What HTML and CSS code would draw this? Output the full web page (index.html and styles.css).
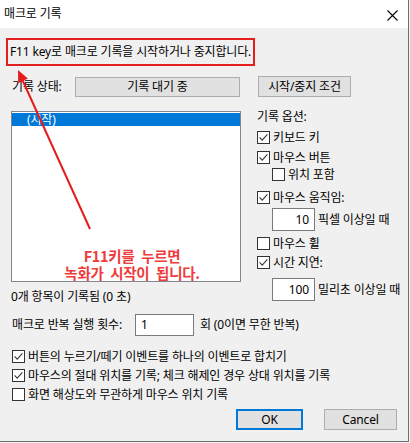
FILE: index.html
```html
<!DOCTYPE html>
<html lang="ko">
<head>
<meta charset="utf-8">
<title>매크로 기록</title>
<link rel="stylesheet" href="styles.css">
</head>
<body>
<div class="dialog">
  <div class="titlebar">
    <span class="title">매크로 기록</span>
    <svg class="close" viewBox="0 0 11 11" width="11" height="11"><path d="M0.5 0.5 L10.5 10.5 M10.5 0.5 L0.5 10.5" stroke="#000" stroke-width="1.1" fill="none"/></svg>
  </div>
  <div class="content">
    <div class="hint">F11 key로 매크로 기록을 시작하거나 중지합니다.</div>
    <div class="status-row">
      <span class="status-label">기록 상태:</span>
      <div class="status">기록 대기 중</div>
      <button class="btn cond">시작/중지 조건</button>
    </div>
    <div class="main">
      <div class="left">
        <div class="list">
          <div class="item selected">(시작)</div>
        </div>
        <div class="count">0개 항목이 기록됨 (0 초)</div>
      </div>
      <div class="options">
        <div class="opt-title">기록 옵션:</div>
        <div class="cb-row mt8"><span class="cb checked"><svg viewBox="0 0 11 11"><path d="M1.6 5.4 L4.2 8.2 L9.4 2.4" stroke="#3a3a3a" stroke-width="1.1" fill="none"/></svg></span><span>키보드 키</span></div>
        <div class="cb-row mt7"><span class="cb checked"><svg viewBox="0 0 11 11"><path d="M1.6 5.4 L4.2 8.2 L9.4 2.4" stroke="#3a3a3a" stroke-width="1.1" fill="none"/></svg></span><span>마우스 버튼</span></div>
        <div class="cb-row mt4 indent"><span class="cb"></span><span>위치 포함</span></div>
        <div class="cb-row mt10"><span class="cb checked"><svg viewBox="0 0 11 11"><path d="M1.6 5.4 L4.2 8.2 L9.4 2.4" stroke="#3a3a3a" stroke-width="1.1" fill="none"/></svg></span><span>마우스 움직임:</span></div>
        <div class="field-row mt4 indent"><span class="field num">10</span><span class="after">픽셀 이상일 때</span></div>
        <div class="cb-row mt6"><span class="cb"></span><span>마우스 휠</span></div>
        <div class="cb-row mt6"><span class="cb checked"><svg viewBox="0 0 11 11"><path d="M1.6 5.4 L4.2 8.2 L9.4 2.4" stroke="#3a3a3a" stroke-width="1.1" fill="none"/></svg></span><span>시간 지연:</span></div>
        <div class="field-row mt9 indent"><span class="field num">100</span><span class="after">밀리초 이상일 때</span></div>
      </div>
    </div>
    <div class="repeat-row">
      <span class="repeat-label">매크로 반복 실행 횟수:</span>
      <span class="field repeat">1</span>
      <span class="repeat-after">회 (0이면 무한 반복)</span>
    </div>
    <div class="checks">
      <div class="cb-row"><span class="cb checked"><svg viewBox="0 0 11 11"><path d="M1.6 5.4 L4.2 8.2 L9.4 2.4" stroke="#3a3a3a" stroke-width="1.1" fill="none"/></svg></span><span>버튼의 누르기/떼기 이벤트를 하나의 이벤트로 합치기</span></div>
      <div class="cb-row"><span class="cb checked"><svg viewBox="0 0 11 11"><path d="M1.6 5.4 L4.2 8.2 L9.4 2.4" stroke="#3a3a3a" stroke-width="1.1" fill="none"/></svg></span><span>마우스의 절대 위치를 기록; 체크 해제인 경우 상대 위치를 기록</span></div>
      <div class="cb-row"><span class="cb"></span><span>화면 해상도와 무관하게 마우스 위치 기록</span></div>
    </div>
    <div class="buttons">
      <button class="btn ok">OK</button>
      <button class="btn cancel">Cancel</button>
    </div>
  </div>
  <svg class="arrow" viewBox="0 0 409 442" width="409" height="442">
    <line x1="90" y1="229" x2="21.5" y2="78" stroke="#e61c1c" stroke-width="2"/>
    <polygon points="18,70 27.8,78.6 18.2,83.2" fill="#e61c1c"/>
  </svg>
  <div class="note">
    <div class="note-line">F11키를 누르면</div>
    <div class="note-line">녹화가 시작이 됩니다.</div>
  </div>
</div>
</body>
</html>
```
FILE: styles.css
```css
* { box-sizing: border-box; }

html, body {
  margin: 0;
  padding: 0;
  background: #f2f2f2;
}

body {
  font-family: "Noto Sans", "Noto Sans CJK KR", sans-serif;
  font-size: 12px;
  line-height: 16px;
  letter-spacing: -0.15px;
  color: #000;
}

.dialog {
  position: relative;
  width: 409px;
  height: 442px;
  background: #f0f0f0;
  border-right: 1px solid #6f6f6f;
  border-bottom: 1px solid #6f6f6f;
}

.titlebar {
  height: 28px;
  background: #fff;
  display: flex;
  align-items: center;
  justify-content: space-between;
  padding-left: 4px;
  padding-right: 10px;
}

.close {
  display: block;
  margin-top: 2px;
}

.content {
  display: flex;
  flex-direction: column;
  align-items: flex-start;
}

.hint {
  margin: 10px 0 0 6px;
  width: 249px;
  height: 28px;
  border: 2px solid #e31e1e;
  padding-left: 2px;
  display: flex;
  align-items: center;
  white-space: nowrap;
}

.status-row {
  margin-top: 10px;
  height: 21px;
  display: flex;
  align-items: center;
}

.status-label {
  margin-left: 12px;
  width: 63px;
}

.status {
  width: 165px;
  height: 20px;
  background: #e1e1e1;
  border: 1px solid #adadad;
  display: flex;
  align-items: center;
  justify-content: center;
}

.btn {
  font: inherit;
  letter-spacing: inherit;
  color: #000;
  background: #e1e1e1;
  border: 1px solid #adadad;
  padding: 0;
  margin: 0;
  display: flex;
  align-items: center;
  justify-content: center;
}

.cond {
  margin-left: 18px;
  width: 93px;
  height: 21px;
}

.main {
  margin-top: 14px;
  display: flex;
  align-items: flex-start;
}

.left {
  margin-left: 11px;
  width: 230px;
}

.list {
  height: 171px;
  background: #fff;
  border: 1px solid #828790;
  padding-top: 1px;
}

.item {
  height: 13px;
  line-height: 13px;
  padding-left: 15px;
}

.item.selected {
  background: #0078d7;
  color: #fff;
}

.count {
  margin-top: 7px;
  height: 16px;
}

.options {
  margin-left: 16px;
  display: flex;
  flex-direction: column;
  align-items: flex-start;
}

.opt-title {
  height: 12px;
  line-height: 12px;
}

.cb-row {
  display: flex;
  align-items: center;
  height: 13px;
  line-height: 13px;
  white-space: nowrap;
}

.cb {
  width: 13px;
  height: 13px;
  flex: none;
  border: 1px solid #333;
  background: #fff;
  margin-right: 3px;
}

.cb svg {
  display: block;
  width: 11px;
  height: 11px;
}

.indent { margin-left: 15px; }
.mt4 { margin-top: 4px; }
.mt6 { margin-top: 6px; }
.mt7 { margin-top: 7px; }
.mt8 { margin-top: 8px; }
.mt9 { margin-top: 9px; }
.mt10 { margin-top: 10px; }

.field-row {
  display: flex;
  align-items: center;
  height: 23px;
  white-space: nowrap;
}

.field {
  background: #fff;
  border: 1px solid #7a7a7a;
  display: flex;
  align-items: center;
}

.field.num {
  width: 43px;
  height: 23px;
  justify-content: flex-end;
  padding-right: 5px;
}

.after {
  margin-left: 3px;
}

.repeat-row {
  margin-top: 9px;
  height: 22px;
  display: flex;
  align-items: center;
  white-space: nowrap;
}

.repeat-label {
  margin-left: 12px;
  width: 123px;
}

.field.repeat {
  width: 59px;
  height: 22px;
  padding-left: 5px;
}

.repeat-after {
  margin-left: 6px;
}

.checks {
  margin-top: 14px;
  margin-left: 12px;
  display: flex;
  flex-direction: column;
  gap: 6px;
}

.buttons {
  margin-top: 8px;
  align-self: stretch;
  display: flex;
  justify-content: flex-end;
  gap: 21px;
  padding-right: 11px;
}

.ok {
  width: 67px;
  height: 21px;
  border: 2px solid #0078d7;
}

.cancel {
  width: 73px;
  height: 21px;
}

.arrow {
  position: absolute;
  left: 0;
  top: 0;
  pointer-events: none;
}

.note {
  position: absolute;
  left: 46px;
  top: 248px;
  width: 172px;
  display: flex;
  flex-direction: column;
  align-items: center;
  font-family: "Noto Sans CJK KR", "Noto Sans", sans-serif;
  font-weight: bold;
  font-size: 14.5px;
  letter-spacing: -0.3px;
  word-spacing: 3px;
  color: #ee3b3b;
  white-space: nowrap;
}

.note-line {
  height: 17px;
  line-height: 15px;
}
```
